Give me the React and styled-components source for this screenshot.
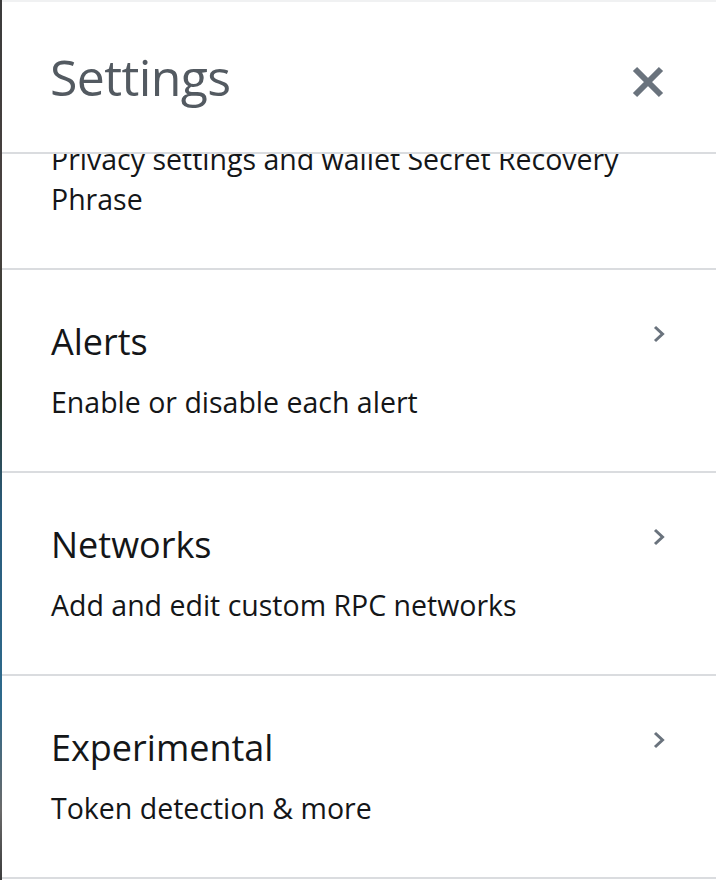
import React, { useLayoutEffect, useRef } from "react";
import styled, { createGlobalStyle } from "styled-components";

const Global = createGlobalStyle`
  html, body, #root { margin: 0; padding: 0; height: 100%; }
  body {
    font-family: "Open Sans", "Liberation Sans", sans-serif;
    background: linear-gradient(180deg, #3b3b3b 0%, #4a4240 25%, #2f3a2c 45%, #2a5c7c 58%, #2e6a8c 80%, #6a6a6a 92%, #3c3c3c 100%);
    overflow: hidden;
  }
`;

const Page = styled.div`
  height: 880px;
  padding-left: 2px;
  display: flex;
`;

const Panel = styled.div`
  flex: 1;
  background: #ffffff;
  border-top: 2px solid #f0f1f2;
  display: flex;
  flex-direction: column;
  height: 878px;
`;

const Header = styled.header`
  height: 150px;
  flex-shrink: 0;
  display: flex;
  align-items: center;
  justify-content: space-between;
  padding: 0 52px 0 48px;
  border-bottom: 2px solid #dadcdf;
`;

const Title = styled.h1`
  margin: 0;
  font-size: 50px;
  line-height: 60px;
  font-weight: 400;
  color: #535a61;
  letter-spacing: -0.6px;
`;

const CloseButton = styled.button`
  width: 32px;
  height: 32px;
  padding: 0;
  margin-top: 10px;
  border: 0;
  background: transparent;
  display: flex;
  cursor: pointer;
`;

const Scroller = styled.div`
  position: relative;
  flex: 1;
  overflow-y: auto;
  scrollbar-width: none;
  &::-webkit-scrollbar { display: none; }
`;

const Item = styled.div`
  display: flex;
  justify-content: space-between;
  align-items: flex-start;
  padding: 50px 51px 49px 49px;
  border-bottom: 2px solid #dadcdf;
  cursor: pointer;
`;

const TextCol = styled.div`
  display: flex;
  flex-direction: column;
  gap: 18px;
  max-width: 590px;
`;

const ItemTitle = styled.div`
  font-size: 36px;
  line-height: 44px;
  color: #141618;
`;

const ItemDesc = styled.div`
  font-size: 28.5px;
  line-height: 40px;
  color: #141618;
`;

const Chevron = styled.svg`
  flex-shrink: 0;
  margin-top: 5px;
  width: 12px;
  height: 18px;
`;

const items = [
  { title: "Security & privacy", desc: "Privacy settings and wallet Secret Recovery Phrase", anchor: true },
  { title: "Alerts", desc: "Enable or disable each alert" },
  { title: "Networks", desc: "Add and edit custom RPC networks" },
  { title: "Experimental", desc: "Token detection & more" },
  { title: "About", desc: "Version, support center, and contact info" },
];

export default function App() {
  const scrollRef = useRef(null);
  const anchorRef = useRef(null);

  useLayoutEffect(() => {
    const s = scrollRef.current;
    const a = anchorRef.current;
    if (s && a) {
      s.scrollTop = a.offsetTop + a.offsetHeight - 116;
    }
  }, []);

  return (
    <>
      <Global />
      <Page>
        <Panel>
          <Header>
            <Title>Settings</Title>
            <CloseButton aria-label="Close">
              <svg width="32" height="32" viewBox="0 0 32 32">
                <path d="M3 3 L29 29 M29 3 L3 29" stroke="#6a737d" strokeWidth="6" strokeLinecap="butt" fill="none" />
              </svg>
            </CloseButton>
          </Header>
          <Scroller ref={scrollRef}>
            {items.map((it) => (
              <Item key={it.title} ref={it.anchor ? anchorRef : undefined}>
                <TextCol>
                  <ItemTitle>{it.title}</ItemTitle>
                  <ItemDesc>{it.desc}</ItemDesc>
                </TextCol>
                <Chevron viewBox="0 0 12 18">
                  <path d="M2 2 L9.5 9 L2 16" stroke="#6a737d" strokeWidth="3" fill="none" />
                </Chevron>
              </Item>
            ))}
          </Scroller>
        </Panel>
      </Page>
    </>
  );
}
